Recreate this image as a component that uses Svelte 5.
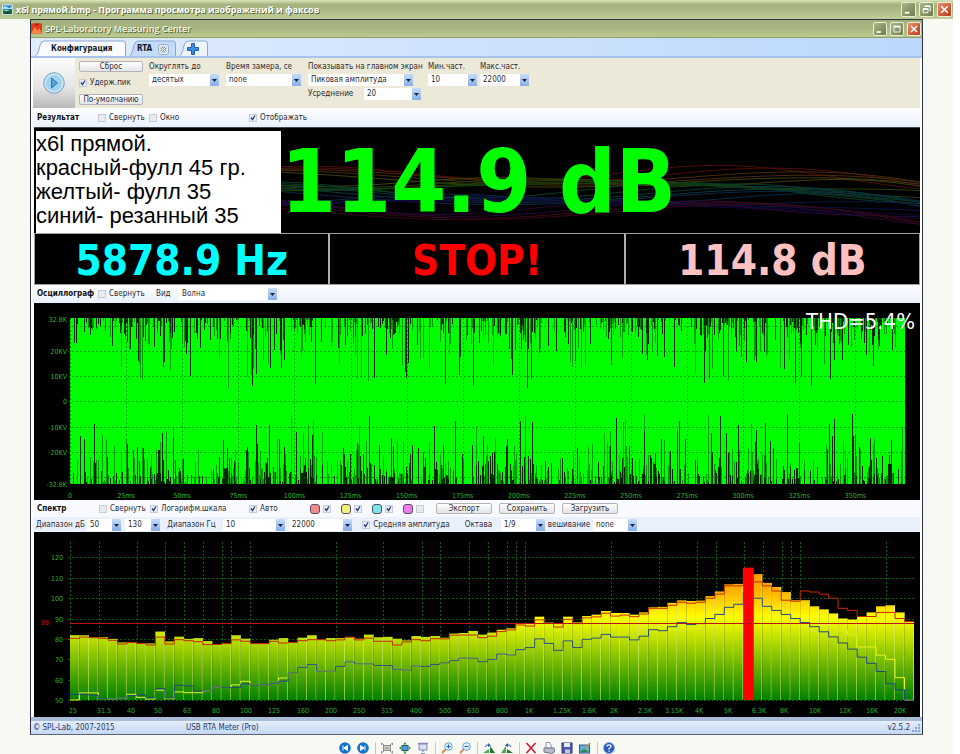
<script lang="ts">
    interface Mark {
        x: number;
        text: string;
    }

    // small deterministic generator, so the noise is the same on each load
    function makeRandom(seed: number) {
        let s = seed;
        return () => {
            s = (s * 1664525 + 1013904223) % 4294967296;
            return s / 4294967296;
        };
    }

    let bars = [
        81.8, 81.8, 80.8, 80.8, 80, 78.3, 78.3, 77.8, 77.8, 83.6, 78.8, 81.1, 80, 80.4, 79, 77.3, 77.7, 81.8, 80.1, 77.7,
        77.7, 79.6, 80.4, 78.3, 80.6, 81.8, 79.6, 80.4, 80.4, 81, 80.1, 82.1, 80.8, 81, 80.1, 79.3, 81.4, 81, 81.4, 80.6,
        82.6, 82.9, 83.9, 82.1, 83.1, 84.5, 85.2, 87.3, 87.3, 90.9, 88, 87.3, 90.9, 88.1, 91.2, 91.9, 93.7, 92.7, 92.7, 91.9,
        93, 95.5, 95.7, 97.7, 98.9, 98.6, 98.8, 101, 103.3, 106.8, 107, 114.8, 111.8, 107.5, 105.5, 103, 99, 99, 96, 94.5,
        92.5, 90, 89.5, 91, 93, 96, 96.5, 93, 88.5
    ];
    let redTrace = [
        80.3, 80.9, 80.6, 80.3, 79.3, 77.5, 78.3, 77.8, 77, 80.9, 77.5, 79.6, 79.1, 78.6, 77.2, 77.3, 77.7, 79.5, 78.8, 77.7,
        77.7, 78.8, 78, 78.3, 79.1, 79.6, 79.6, 79.1, 79.5, 80.8, 79.5, 80.4, 78.8, 78.8, 77, 78.5, 79.6, 79.1, 80.1, 80,
        81.8, 81.9, 81.9, 80.6, 81.3, 83.6, 84.4, 86.8, 86.3, 89.3, 87.6, 85.8, 89.6, 87.5, 90.3, 90.8, 92.6, 91.2, 91.7, 90.9,
        92.2, 95, 95, 96.5, 98, 97.5, 98, 100, 102, 106, 106, 114, 108, 106, 103.5, 99, 98.5, 103.5, 103, 102,
        100, 95, 94, 91, 91, 93, 93, 90, 88.5
    ];
    let blueTrace = [
        52.8, 52.8, 52.3, 50.7, 50.5, 51.1, 52.1, 52.5, 51.1, 55.6, 51, 57.2, 56.9, 54.4, 54.4, 56.5, 56.1, 56.1, 57.9, 57.2,
        57.5, 58, 59.3, 63.3, 66, 67.5, 64.2, 64.2, 66.5, 68.7, 67.7, 67.7, 67, 66.9, 65.1, 64.7, 66.7, 66.5, 67.5, 68.2,
        69.3, 70.6, 70.5, 68.8, 70, 72.6, 72.1, 74.7, 75.7, 80, 77.8, 74.4, 79, 75.7, 79.8, 80.4, 82.2, 80.9, 80.9, 79.5,
        81.3, 84.5, 84, 86, 88, 87, 87.5, 90, 92, 95.5, 97, 103, 100, 96, 94, 92, 90, 88, 86, 83.5,
        81, 78, 75, 71, 68, 64, 58, 55, 50
    ];
    let yellowHead = [50, 53.5, 53.5, 50.7, 50.5, 51.1, 52.8, 51.3, 50.5, 54.8, 50.7, 54, 53.6, 53.6, 54.4, 56.5, 56.1, 57.4, 59.2, 57.2, 57.5, 58, 60.8];
    let yellowTail = [87, 86, 84, 82, 76, 76, 72, 70, 61, 50];
    let yellowTrace = [...yellowHead, ...blueTrace.slice(yellowHead.length, 79), ...yellowTail];

    const PEAK = 71;
    const BAR = 844 / 89;
    const FLOOR = 168;

    function levelY(db: number) {
        return FLOOR - (db - 50) * 2.037;
    }

    function stepPath(levels: number[]) {
        return levels
            .map((db, i) => `${i ? "L" : "M"}${(36 + i * BAR).toFixed(1)} ${levelY(db).toFixed(1)}H${(36 + (i + 1) * BAR).toFixed(1)}`)
            .join("");
    }

    let dbMarks = [120, 110, 100, 90, 80, 70, 60, 50];
    let gridFreqs = [36, 65, 103, 131, 150, 169, 188, 197, 216, 302, 349, 388, 406, 435, 454, 473, 482, 491, 577, 625, 663, 682, 710, 729, 748, 757, 766, 852];
    let freqMarks: Mark[] = [
        { x: 39, text: "25" }, { x: 70, text: "31.5" }, { x: 97, text: "40" }, { x: 124, text: "50" },
        { x: 153, text: "63" }, { x: 182, text: "80" }, { x: 212, text: "100" }, { x: 240, text: "125" },
        { x: 269, text: "160" }, { x: 297, text: "200" }, { x: 325, text: "250" }, { x: 353, text: "315" },
        { x: 382, text: "400" }, { x: 411, text: "500" }, { x: 439, text: "630" }, { x: 468, text: "800" },
        { x: 495, text: "1K" }, { x: 528, text: "1.25K" }, { x: 555, text: "1.6K" }, { x: 580, text: "2K" },
        { x: 611, text: "2.5K" }, { x: 640, text: "3.15K" }, { x: 665, text: "4K" }, { x: 694, text: "5K" },
        { x: 725, text: "6.3K" }, { x: 750, text: "8K" }, { x: 781, text: "10K" }, { x: 811, text: "12K" },
        { x: 838, text: "16K" }, { x: 866, text: "20K" }
    ];

    let voltMarks = [
        { y: 16, text: "32.8K" }, { y: 48, text: "20KV" }, { y: 73, text: "10KV" }, { y: 98, text: "0" },
        { y: 124, text: "-10KV" }, { y: 149, text: "-20KV" }, { y: 181, text: "-32.8K" }
    ];
    let voltGrid = [23, 48, 73, 98, 124, 149, 174];
    let timeMarks: Mark[] = Array.from({ length: 15 }, (_, i) => ({
        x: 36 + i * 56.1,
        text: i ? `${i * 25}ms` : "0"
    }));

    function spikes(seed: number, top: boolean, density: number) {
        const rnd = makeRandom(seed);
        let d = "";
        for (let x = 37; x < 871; x++) {
            const dense = Math.sin(x / 7) + Math.sin(x / 19 + 2) > -0.5;
            if (rnd() > (dense ? density : density * 0.45)) continue;
            const depth = Math.min(58 + (x % 13), 2 - Math.log(1 - rnd()) * 18);
            d += top ? `M${x}.5 15v${depth.toFixed(0)}` : `M${x}.5 181v-${depth.toFixed(0)}`;
        }
        return d;
    }

    let topShade = spikes(29, true, 0.4);
    let topSpikes = spikes(11, true, 0.42);
    let bottomShade = spikes(83, false, 0.5);
    let bottomSpikes = spikes(47, false, 0.48);

    let waveColors = ["#701212", "#6a3c0c", "#5c5a0c", "#385c0c", "#145c14", "#0c5838", "#0c5058", "#0c3a60", "#101e60", "#160c50", "#380c48", "#500c24"];
    let waves = Array.from({ length: 24 }, (_, i) => {
        let d = "";
        for (let x = 240; x <= 888; x += 12) {
            const drop = Math.max(0, (x - 620) / 266) ** 2 * 16;
            const y = 64 + 4 * Math.sin((x - 250) / 130) + drop + (i - 12) * 1.7 + 6 * Math.sin(x / (62 + (i % 5) * 12) + i * 0.7);
            d += `${d ? "L" : "M"}${x} ${y.toFixed(1)}`;
        }
        return { d, color: waveColors[Math.floor(i / 2)] };
    });

    let channels = [
        { name: "Красный", color: "#f58a8a", on: true },
        { name: "Желтый", color: "#f4f07c", on: true },
        { name: "Синий", color: "#7ce8ee", on: true },
        { name: "Розовый", color: "#ee7cee", on: false }
    ];
</script>

{#snippet combo(id: string, value: string, label?: string)}
    <span class="combo">
        <select {id} aria-label={label}><option>{value}</option></select>
        <svg class="arrow" viewBox="0 0 9 12" aria-hidden="true">
            <path d="M2 5h5L4.500 8z" fill="#16204a" />
        </svg>
    </span>
{/snippet}

{#snippet check(text: string, on: boolean)}
    <label class="check"><input type="checkbox" checked={on} />{text}</label>
{/snippet}

{#snippet windowButton(kind: string, title: string)}
    <button class="win-btn {kind}" {title} aria-label={title}>
        <svg viewBox="0 0 14 14" fill="none" stroke="#fff" aria-hidden="true">
            {#if kind === "min"}
                <path d="M3 10.500h5" stroke-width="2" />
            {:else if kind === "restore"}
                <path d="M3.500 6.500h5v4h-5zM3.500 6.500h5M5.500 4v-.5h5.500v5h-1" />
                <path d="M3 6.500h6M5 3.500h6" stroke-width="1.500" />
            {:else if kind === "max"}
                <path d="M3.500 4.500h7v6h-7z" />
                <path d="M3 4h8" stroke-width="2" />
            {:else}
                <path d="M3.500 3.500l7 7M10.500 3.500l-7 7" stroke-width="1.800" />
            {/if}
        </svg>
    </button>
{/snippet}

<div class="viewer">
    <header class="titlebar outer">
        <svg class="title-icon" viewBox="0 0 12 11" aria-hidden="true">
            <rect width="12" height="11" fill="#d8f0f8" />
            <rect x="1" y="1" width="10" height="5" fill="#2c7ed0" />
            <path d="M1 3q3-2 5 0t5-1v3H1z" fill="#a8e0f4" />
            <path d="M1 6l4 1 6-2v5H1z" fill="#1c6c2c" />
            <path d="M1 10l5-2 5 2z" fill="#103c50" />
        </svg>
        <h1>x6l прямой.bmp - Программа просмотра изображений и факсов</h1>
        {@render windowButton("min", "Свернуть")}
        {@render windowButton("restore", "Восстановить")}
        {@render windowButton("close", "Закрыть")}
    </header>

    <main class="window">
        <header class="titlebar inner">
            <svg class="title-icon" viewBox="0 0 12 11" aria-hidden="true">
                <rect width="12" height="11" fill="#e03c1c" />
                <path d="M0 11l4-7 3 4 2-3 3 6z" fill="#f88848" />
                <path d="M3 0l3 3 4-3z" fill="#b81c10" />
            </svg>
            <h2>SPL-Laboratory Measuring Center</h2>
            {@render windowButton("min", "Свернуть")}
            {@render windowButton("max", "Развернуть")}
            {@render windowButton("close", "Закрыть")}
        </header>

        <nav class="tabs">
            <button class="tab config">
                <svg viewBox="0 0 91 16" preserveAspectRatio="none" aria-hidden="true">
                    <path d="M.5 16q2-1 3-5l2-7q1-3 4-3H88q2.500 0 2.500 3v12" fill="#fbfcfe" stroke="#8aa8d4" />
                </svg>
                <span>Конфигурация</span>
            </button>
            <button class="tab rta">
                <svg viewBox="0 0 47 16" preserveAspectRatio="none" aria-hidden="true">
                    <path d="M.5 16q2-1 3-5l2-7q1-3 4-3H44q2.500 0 2.500 3v12" fill="#c4dcfa" stroke="#8aa8d4" />
                </svg>
                <span>RTA</span>
                <svg class="tab-close" viewBox="0 0 11 11" aria-hidden="true">
                    <rect x=".5" y=".5" width="10" height="10" rx="2" fill="#e4eef8" stroke="#98aabc" />
                    <path d="M3 3l5 5M8 3L3 8" stroke="#8898a8" stroke-width="2.500" />
                    <path d="M3 3l5 5M8 3L3 8" stroke="#fff" />
                </svg>
            </button>
            <button class="tab add" aria-label="Добавить">
                <svg viewBox="0 0 29 16" preserveAspectRatio="none" aria-hidden="true">
                    <path d="M.5 16q2-1 3-5l2-7q1-3 4-3H26q2.500 0 2.500 3v12" fill="#eef4fc" stroke="#8aa8d4" />
                </svg>
                <svg class="plus" viewBox="0 0 12 12" aria-hidden="true">
                    <path d="M4.500.5h3v4h4v3h-4v4h-3v-4h-4v-3h4z" fill="#3c8ce4" stroke="#1c60b8" />
                </svg>
            </button>
        </nav>

        <section class="toolbar">
            <button class="play" aria-label="Пуск">
                <svg viewBox="0 0 22 22" aria-hidden="true">
                    <circle cx="11" cy="11" r="10.300" fill="#b8dcf2" stroke="#7ea4bc" />
                    <circle cx="11" cy="11" r="8.500" fill="#a0d2f0" stroke="#d4ecf8" />
                    <path d="M8.500 6v10l6-5z" fill="#58a4d8" stroke="#2c78b0" />
                </svg>
            </button>
            <div class="actions">
                <button class="push">Сброс</button>
                {@render check("Удерж.пик", true)}
                <button class="push">По-умолчанию</button>
            </div>
            <div class="field round">
                <label for="round">Округлять до</label>
                {@render combo("round", "десятых")}
            </div>
            <div class="field time">
                <label for="time">Время замера, се</label>
                {@render combo("time", "none")}
            </div>
            <div class="field show">
                <label for="show">Показывать на главном экран</label>
                {@render combo("show", "Пиковая амплитуда")}
                <div class="average">
                    <label for="average">Усреднение</label>
                    {@render combo("average", "20")}
                </div>
            </div>
            <div class="field freq">
                <label for="minfreq">Мин.част.</label>
                {@render combo("minfreq", "10")}
            </div>
            <div class="field freq">
                <label for="maxfreq">Макс.част.</label>
                {@render combo("maxfreq", "22000")}
            </div>
        </section>

        <div class="bar result-bar">
            <h3>Результат</h3>
            {@render check("Свернуть", false)}
            {@render check("Окно", false)}
            {@render check("Отображать", true)}
        </div>

        <section class="display">
            <svg class="waves" viewBox="0 0 886 106" preserveAspectRatio="none" fill="none" aria-hidden="true">
                {#each waves as wave}
                    <path d={wave.d} stroke={wave.color} />
                {/each}
            </svg>
            <p class="note">
                x6l прямой.<br />
                красный-фулл 45 гр.<br />
                желтый- фулл 35<br />
                синий- резанный 35
            </p>
            <output class="main-level">114.9 dB</output>
        </section>
        <section class="readouts">
            <output class="hz">5878.9 Hz</output>
            <output class="stop">STOP!</output>
            <output class="avg">114.8 dB</output>
        </section>

        <div class="bar scope-bar">
            <h3>Осциллограф</h3>
            {@render check("Свернуть", false)}
            <label for="view">Вид</label>
            {@render combo("view", "Волна")}
        </div>

        <svg class="chart" viewBox="0 0 886 197">
            <rect x="36" y="15" width="835" height="166" fill="#00ff00" />
            <path d={topShade} stroke="#009c00" />
            <path d={bottomShade} stroke="#009c00" />
            <path d={topSpikes} stroke="#002800" />
            <path d={bottomSpikes} stroke="#002800" />
            <g class="grid over">
                {#each voltGrid as y}
                    <path d="M34 {y}.5H871" />
                {/each}
                {#each timeMarks as mark}
                    <path d="M{Math.round(mark.x)}.5 15V184" />
                {/each}
            </g>
            {#each voltMarks as mark}
                <text class="tick end" x="33" y={mark.y + 3}>{mark.text}</text>
            {/each}
            {#each timeMarks as mark}
                <text class="tick" x={mark.x} y="195">{mark.text}</text>
            {/each}
            <text class="thd" x="881" y="26">THD=5.4%</text>
        </svg>

        <div class="spectrum-bar">
            <div class="row first">
                <h3>Спектр</h3>
                {@render check("Свернуть", false)}
                {@render check("Логарифм.шкала", true)}
                {@render check("Авто", true)}
                {#each channels as channel}
                    <span class="channel">
                        <button class="swatch" style:background={channel.color} aria-label={channel.name}></button>
                        <input type="checkbox" checked={channel.on} aria-label={channel.name} />
                    </span>
                {/each}
                <div class="files">
                    <button class="push">Экспорт</button>
                    <button class="push">Сохранить</button>
                    <button class="push">Загрузить</button>
                </div>
            </div>
            <div class="row second">
                <label for="dbmin">Диапазон дБ</label>
                {@render combo("dbmin", "50")}
                {@render combo("dbmax", "130", "Диапазон дБ, до")}
                <label for="hzmin">Диапазон Гц</label>
                {@render combo("hzmin", "10")}
                {@render combo("hzmax", "22000", "Диапазон Гц, до")}
                {@render check("Средняя амплитуда", true)}
                <label for="octave">Октава</label>
                {@render combo("octave", "1/9")}
                <label for="weight">вешивание</label>
                {@render combo("weight", "none")}
            </div>
        </div>

        <svg class="chart" viewBox="0 0 886 185">
            <defs>
                <linearGradient id="level" gradientUnits="userSpaceOnUse" x1="0" y1="30" x2="0" y2={FLOOR}>
                    <stop offset="0" stop-color="#ff8c00" />
                    <stop offset="0.220" stop-color="#ffb400" />
                    <stop offset="0.400" stop-color="#ffff00" />
                    <stop offset="0.550" stop-color="#c0e000" />
                    <stop offset="1" stop-color="#008000" />
                </linearGradient>
            </defs>
            <g class="grid">
                {#each dbMarks as db}
                    <path d="M34 {Math.round(levelY(db))}.5H880" />
                {/each}
                {#each gridFreqs as x}
                    <path d="M{x}.5 10V{FLOOR}" />
                {/each}
            </g>
            {#each bars as db, i}
                <rect x={36 + i * BAR} y={levelY(db)} width={BAR} height={FLOOR - levelY(db)} fill="url(#level)" />
                <path d="M{36 + (i + 1) * BAR - 0.5} {levelY(db)}V{FLOOR}" stroke="#d8f080" stroke-opacity="0.600" />
            {/each}
            <path d={stepPath(yellowTrace)} fill="none" stroke="#e8f020" />
            <path d={stepPath(blueTrace)} fill="none" stroke="#204880" />
            <path d={stepPath(redTrace)} fill="none" stroke="#c82800" />
            <rect x={36 + PEAK * BAR} y={levelY(115)} width={BAR + 1} height={FLOOR - levelY(115)} fill="#ff0000" />
            <path d="M36 91.500H880" stroke="#b81414" />
            {#each dbMarks as db}
                <text class="tick end" x="29" y={levelY(db) + 3}>{db}</text>
            {/each}
            <text class="tick limit" x="11" y="93">88</text>
            {#each freqMarks as mark}
                <text class="tick" x={mark.x} y="181">{mark.text}</text>
            {/each}
        </svg>

        <footer class="status">
            <span>© SPL-Lab, 2007-2015</span>
            <span>USB RTA Meter (Pro)</span>
            <span class="version">v2.5.2</span>
            <svg class="grip" viewBox="0 0 8 8" fill="#8ca4cc" aria-hidden="true">
                <path d="M6 0h2v2H6zM6 3h2v2H6zM3 3h2v2H3zM6 6h2v2H6zM3 6h2v2H3zM0 6h2v2H0z" />
            </svg>
        </footer>
    </main>

    <nav class="viewer-tools">
        <button aria-label="Предыдущее">
            <svg viewBox="0 0 12 12"><circle cx="6" cy="6" r="5.800" fill="#1470c8" /><path d="M4 3.500v5M8.500 3.500v5L5 6z" fill="#fff" stroke="#fff" /></svg>
        </button>
        <button aria-label="Следующее">
            <svg viewBox="0 0 12 12"><circle cx="6" cy="6" r="5.800" fill="#1470c8" /><path d="M8 3.500v5M3.500 3.500v5L7 6z" fill="#fff" stroke="#fff" /></svg>
        </button>
        <i></i>
        <button aria-label="Истинный размер">
            <svg viewBox="0 0 12 12" fill="none" stroke="#8c8c8c"><rect x="2.500" y="3.500" width="7" height="5" fill="#d0d0d0" /><path d="M4 7l1.500-2L7 7l1-1M.5 3V1L3 3M11.500 3V1L9 3M.5 9v2L3 9M11.500 9v2L9 9" /></svg>
        </button>
        <button aria-label="По размеру окна">
            <svg viewBox="0 0 12 12"><rect x="3" y="3.500" width="6" height="5" fill="#4c9ad8" stroke="#285880" /><path d="M6 0l2 2.500H4zM6 12l2-2.500H4zM0 6l2.500-2v4zM12 6L9.500 4v4z" fill="#38a040" /></svg>
        </button>
        <button aria-label="Слайд-шоу">
            <svg viewBox="0 0 12 12" fill="none" stroke="#8088b8"><path d="M1 1.500h10" stroke-width="1.500" /><path d="M2 2h8v6H2z" fill="#dce0f4" /><path d="M6 8v2M4 11.500h4" /></svg>
        </button>
        <i></i>
        <button aria-label="Увеличить">
            <svg viewBox="0 0 12 12" fill="none"><path d="M1 11l4-4" stroke="#d0905c" stroke-width="2" /><circle cx="7.500" cy="4.500" r="3.800" fill="#d8f0fc" stroke="#6ca4d0" /><path d="M5.500 4.500h4M7.500 2.500v4" stroke="#2060c0" /></svg>
        </button>
        <button aria-label="Уменьшить">
            <svg viewBox="0 0 12 12" fill="none"><path d="M1 11l4-4" stroke="#d0905c" stroke-width="2" /><circle cx="7.500" cy="4.500" r="3.800" fill="#d8f0fc" stroke="#6ca4d0" /><path d="M5.500 4.500h4" stroke="#2060c0" /></svg>
        </button>
        <i></i>
        <button aria-label="Повернуть вправо">
            <svg viewBox="0 0 12 12"><path d="M7 4l5 7H7z" fill="#187828" /><path d="M0 11l6-4v4z" fill="#50a850" /><path d="M2 5q1-3 4-2" fill="none" stroke="#2060b0" /><path d="M5 1l3 2.500L5 5z" fill="#2060b0" /></svg>
        </button>
        <button aria-label="Повернуть влево">
            <svg viewBox="0 0 12 12"><path d="M5 4l-5 7h5z" fill="#50a850" /><path d="M12 11L6 7v4z" fill="#187828" /><path d="M10 5Q9 2 6 3" fill="none" stroke="#2060b0" /><path d="M7 1L4 3.500 7 5z" fill="#2060b0" /></svg>
        </button>
        <i></i>
        <button aria-label="Удалить">
            <svg viewBox="0 0 12 12"><path d="M1.500 1l9 10M10.500 1l-9 10" stroke="#c81c34" stroke-width="1.600" /></svg>
        </button>
        <button aria-label="Печать">
            <svg viewBox="0 0 12 12"><path d="M3 6V.5h4L9 6z" fill="#fff" stroke="#8c94b0" /><path d="M1 6h10l.5 4-3 1.500L1 10z" fill="#b8bccc" stroke="#70748c" /></svg>
        </button>
        <button aria-label="Сохранить">
            <svg viewBox="0 0 12 12"><rect x="1" y="1" width="10" height="10" fill="#4c58a8" stroke="#303878" /><rect x="3" y="1" width="6" height="4" fill="#e8ecf8" /><rect x="4" y="7.500" width="5" height="3.500" fill="#c0c8e4" /></svg>
        </button>
        <button aria-label="Изменить">
            <svg viewBox="0 0 12 12"><rect x=".5" y="3" width="10" height="8" fill="#58b0e8" stroke="#305c88" /><path d="M1 10l4-3 5 3z" fill="#288c38" /><path d="M5 7l6-6" stroke="#d89028" stroke-width="1.500" /></svg>
        </button>
        <i></i>
        <button aria-label="Справка">
            <svg viewBox="0 0 12 12"><circle cx="6" cy="6" r="5.500" fill="#2858b8" stroke="#8cb0e4" /><path d="M4 4.500Q4 2.800 6 2.800T8 4.500Q8 5.500 6 6.500v1M6 8.500v1.300" fill="none" stroke="#fff" stroke-width="1.300" /></svg>
        </button>
    </nav>
</div>

<style>
    :global(body) {
        margin: 0;
        background: #ffffff;
    }

    .viewer {
        margin-right: 7px;
        min-height: 100vh;
        background: #f8f9f3;
        font-family: "DejaVu Sans Condensed", "DejaVu Sans", sans-serif;
        font-size: 8px;
        line-height: 10px;
        color: #2c2c34;
    }

    h1,
    h2,
    h3,
    p {
        margin: 0;
    }

    button,
    input,
    select {
        margin: 0;
        padding: 0;
        border: 0;
        background: none;
        font: inherit;
        color: inherit;
    }

    label,
    h3,
    .push {
        white-space: nowrap;
    }

    svg {
        display: block;
    }

    .titlebar {
        display: flex;
        align-items: center;
        gap: 3px;
        box-sizing: border-box;
        padding: 0 1px 0 2px;
        background: linear-gradient(#dbe5b8, #a3b07c 25%, #b0bd88 60%, #c0ce98);
    }

    .titlebar.outer {
        height: 19px;
    }

    .titlebar.inner {
        height: 18px;
        padding: 0 1px 0 0;
        border-bottom: 1px solid #8d9c6a;
        background: linear-gradient(#a3b07c, #a8b680 50%, #bccb90);
    }

    .titlebar h1,
    .titlebar h2 {
        flex: 1;
        font-family: "Open Sans", sans-serif;
        font-size: 9px;
        line-height: 14px;
        font-weight: 700;
        color: #ffffff;
        text-shadow: 1px 1px 0 #5c6840;
        white-space: nowrap;
    }

    .titlebar h2 {
        font-weight: 600;
        color: #f4f6e0;
    }

    .title-icon {
        width: 11px;
        height: 11px;
    }

    .win-btn {
        width: 15px;
        height: 15px;
        box-sizing: border-box;
        border: 1px solid #e8eed0;
        border-radius: 2px;
        background: linear-gradient(135deg, #a8b888, #6c7c4c);
    }

    .inner .win-btn {
        width: 14px;
        height: 14px;
    }

    .win-btn.close {
        background: linear-gradient(135deg, #e89070, #b83818);
    }

    .window {
        margin: 0 30px;
        border: 1px solid #2c3444;
        border-bottom-color: #5c6470;
        background: #ffffff;
    }

    .tabs {
        display: flex;
        gap: 3px;
        height: 16px;
        padding: 2px 0 0 4px;
        border-bottom: 2px solid #a8c4ea;
        background: linear-gradient(90deg, #e0ecfc, #bcd8fc);
    }

    .tab {
        position: relative;
        display: flex;
        align-items: center;
        padding-top: 2px;
        font-weight: bold;
        color: #101828;
    }

    .tab > svg:first-child {
        position: absolute;
        inset: 0;
        width: 100%;
        height: 100%;
    }

    .tab > :not(:first-child) {
        position: relative;
    }

    .tab.config {
        width: 91px;
        padding-left: 16px;
    }

    .tab.rta {
        width: 47px;
        padding-left: 8px;
        gap: 6px;
    }

    .tab-close {
        width: 11px;
        height: 11px;
    }

    .tab.add {
        width: 29px;
        padding-left: 8px;
    }

    .plus {
        width: 12px;
        height: 12px;
    }

    .toolbar {
        display: flex;
        height: 50px;
        margin: 0 2px;
        background: #ece9d8;
    }

    .play {
        display: flex;
        align-items: center;
        justify-content: center;
        width: 42px;
        background: linear-gradient(#fdfdfd, #e4e4e4 60%, #b8b8b8);
    }

    .play svg {
        width: 22px;
        height: 22px;
    }

    .actions {
        display: flex;
        flex-direction: column;
        justify-content: space-between;
        width: 64px;
        margin: 3px 6px 3px 4px;
    }

    .push {
        height: 11px;
        box-sizing: border-box;
        border: 1px solid #b4b4b8;
        border-radius: 2px;
        background: linear-gradient(#ffffff, #e4e4e8);
        line-height: 9px;
        text-align: center;
    }

    .check {
        display: flex;
        align-items: center;
        gap: 3px;
    }

    input[type="checkbox"] {
        appearance: none;
        flex: none;
        width: 8px;
        height: 8px;
        box-sizing: border-box;
        border: 1px solid #c8ccd4;
        background: #e8eaee;
    }

    input[type="checkbox"]:checked {
        background: #e8eefa url("data:image/svg+xml,%3Csvg xmlns='http://www.w3.org/2000/svg' viewBox='0 0 6 6'%3E%3Cpath d='M1 2.500l1.500 2L5 .5' fill='none' stroke='%23283c78' stroke-width='1.300'/%3E%3C/svg%3E") center / 6px 6px no-repeat;
    }

    .field {
        margin: 4px 7px 0 0;
    }

    .field > label {
        display: block;
        height: 12px;
    }

    .field.round {
        width: 70px;
    }

    .field.time {
        width: 75px;
    }

    .field.show {
        width: 113px;
    }

    .field.show > .combo {
        width: 105px;
    }

    .field.freq {
        width: 49px;
        margin-right: 3px;
    }

    .average {
        display: grid;
        grid-template-columns: 56px 1fr;
        align-items: center;
        margin-top: 2px;
    }

    .combo {
        display: flex;
        height: 12px;
        background: #ffffff;
    }

    .combo select {
        appearance: none;
        flex: 1;
        min-width: 0;
        padding-left: 3px;
    }

    .arrow {
        width: 9px;
        height: 12px;
        background: linear-gradient(#c8dcfa, #88aee4);
    }

    .bar,
    .row {
        display: grid;
        align-items: center;
        margin: 0 2px;
        padding-left: 4px;
        background: linear-gradient(#fdfdff, #eaf1fd);
    }

    h3 {
        font-size: 8px;
        line-height: 10px;
        color: #101010;
    }

    .result-bar {
        grid-template-columns: 61px 51px 100px 80px;
        height: 19px;
    }

    .scope-bar {
        grid-template-columns: 61px 58px 23px 98px;
        height: 18px;
    }

    .display {
        position: relative;
        display: flex;
        height: 105px;
        margin: 0 2px 0 3px;
        border-top: 1px solid #404850;
        background: #000000;
        overflow: hidden;
    }

    .waves {
        position: absolute;
        inset: 0;
        width: 100%;
        height: 100%;
        opacity: 0.7;
    }

    .note {
        position: relative;
        box-sizing: border-box;
        width: 245px;
        height: 102px;
        margin: 3px 0 0 2px;
        padding-top: 1px;
        background: #ffffff;
        font-family: "Liberation Sans", sans-serif;
        font-size: 22px;
        line-height: 24px;
        color: #000000;
        white-space: nowrap;
    }

    .main-level {
        position: relative;
        font-size: 88px;
        line-height: 108px;
        font-weight: bold;
        color: #00ff00;
        white-space: nowrap;
    }

    .readouts {
        display: grid;
        grid-template-columns: repeat(3, 1fr);
        gap: 2px;
        margin: 0 2px 0 3px;
        border: 1px solid #a0a0a0;
        background: #b0b0b0;
    }

    .readouts output {
        height: 50px;
        background: #000000;
        font-size: 42px;
        line-height: 54px;
        font-weight: bold;
        text-align: center;
        white-space: nowrap;
    }

    .hz {
        color: #00ffff;
    }

    .stop {
        color: #ff0000;
    }

    .avg {
        color: #ffc0c0;
    }

    .chart {
        width: calc(100% - 5px);
        margin: 0 2px 0 3px;
        background: #000000;
    }

    .grid path {
        stroke: #0c5c0c;
        stroke-dasharray: 2 2;
    }

    .grid.over path {
        stroke: #006400;
        stroke-opacity: 0.6;
    }

    .tick {
        font-size: 7px;
        fill: #28b428;
        text-anchor: middle;
    }

    .tick.end {
        text-anchor: end;
    }

    .tick.limit {
        fill: #b01818;
    }

    .thd {
        font-size: 22px;
        fill: #ffffff;
        text-anchor: end;
    }

    .row.first {
        grid-template-columns: 62px 51px 99px 61px repeat(3, 31px) 33px 1fr;
        height: 17px;
        background: #f8faff;
    }

    .row.second {
        grid-template-columns: 47px 34px 35px 55px 62px 63px 100px 37px 44px 40px 44px;
        column-gap: 4px;
        height: 15px;
        padding-left: 3px;
        background: #eaf1fd;
    }

    .row.second label:not(:first-child) {
        justify-self: center;
    }

    .channel {
        display: flex;
        align-items: center;
        gap: 3px;
    }

    .swatch {
        width: 10px;
        height: 10px;
        box-sizing: border-box;
        border: 1px solid #585060;
        border-radius: 3px;
    }

    .files {
        display: flex;
        gap: 7px;
    }

    .files .push {
        width: 56px;
    }

    .status {
        display: grid;
        grid-template-columns: 151px 1fr auto auto;
        align-items: center;
        column-gap: 2px;
        height: 13px;
        padding: 0 2px;
        border-top: 4px solid #a8bcd8;
        background: linear-gradient(#e4eefc, #c4d8f4);
        color: #283c68;
    }

    .grip {
        width: 8px;
        height: 8px;
    }

    .viewer-tools {
        display: flex;
        justify-content: center;
        gap: 6px;
        padding-top: 7px;
    }

    .viewer-tools button,
    .viewer-tools svg {
        width: 12px;
        height: 12px;
    }

    .viewer-tools i {
        width: 1px;
        height: 12px;
        margin: 0 -1px 0 0;
        background: #c8c8c0;
    }
</style>
